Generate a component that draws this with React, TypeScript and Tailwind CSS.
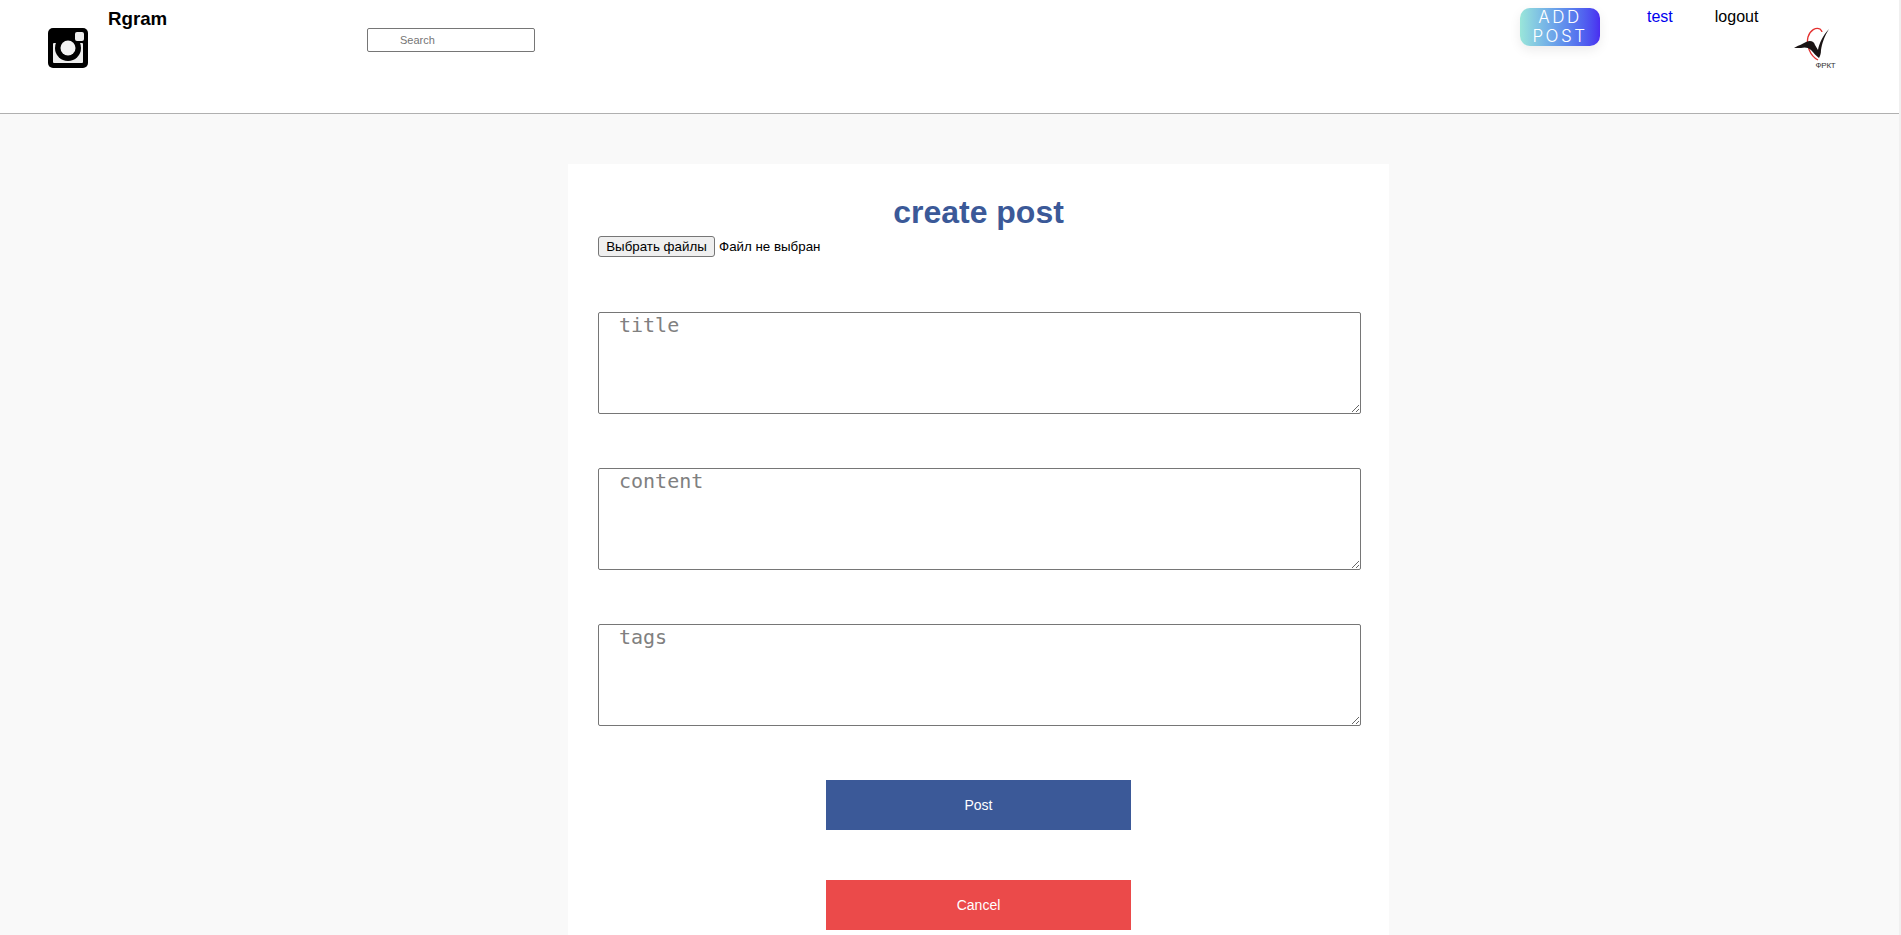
const sans = "font-['Liberation_Sans',Arial,sans-serif]";

const area =
  "block w-[763px] h-[102px] border border-[#767676] rounded-[2px] bg-transparent pl-[20px] pr-1 pt-px font-['DejaVu_Sans_Mono',monospace] text-[20px] leading-[23px] placeholder:text-[#808080] outline-none resize-y";

function InstaIcon() {
  return (
    <svg viewBox="0 0 40 40" className="w-10 h-10 shrink-0 block">
      <rect x="0" y="0" width="40" height="40" rx="5" fill="#000" />
      <rect x="5" y="15" width="30" height="20" rx="1" fill="#eee" />
      <circle cx="20" cy="20" r="13" fill="#000" />
      <circle cx="20" cy="20" r="7.5" fill="#f2f2f2" />
      <rect x="27" y="4" width="9" height="9" rx="2" fill="#eee" />
    </svg>
  );
}

function Logo() {
  return (
    <div className="relative w-[42px] h-[42px] shrink-0">
      <svg viewBox="0 0 42 42" className="w-[42px] h-[42px] block">
        <path d="M24 33C16 29 12 18 14 10c2-7 8-10 12-8 1 1 2 2 2 3" fill="none" stroke="#e4302f" strokeWidth="1.3" />
        <path
          d="M0 21C5 18 9 17 12 15c4-2 8-1 9 3l3 5c1-6 5-15 11-21-5 8-7 15-8 21 0 4-1 6-2 8-3-2-5-5-8-8-3-3-7-3-10-2-2 0-5 0-7 0z"
          fill="#1a1414"
        />
      </svg>
      <span className="absolute left-[21px] top-[34px] text-[8px] leading-[9px] tracking-[-0.2px] text-[#333]">ФРКТ</span>
    </div>
  );
}

export default function App() {
  return (
    <div className={`${sans} flex h-screen overflow-hidden bg-[#f0f0f0] text-black`}>
      <div className="w-[1899px] shrink-0 bg-[#f9f9f9]">
        <header className="flex items-start h-[114px] bg-white border-b border-[#b0b0b0] pl-[48px]">
          <div className="mt-[28px]">
            <InstaIcon />
          </div>
          <h3 className="ml-[20px] mt-[8px] w-[259px] text-[18.72px] leading-[21px] font-bold">Rgram</h3>
          <input
            placeholder="Search"
            className="mt-[28px] w-[168px] h-[24px] border border-[#767676] rounded-[2px] pl-[32px] text-[11px] placeholder:text-[#757575] outline-none"
          />
          <button className="ml-[985px] mt-[8px] w-[80px] h-[38px] rounded-[10px] bg-gradient-to-r from-[#9ae6d9] to-[#4a2cf0] text-white font-['Inter',sans-serif] font-light text-[17px] leading-[19px] tracking-[2.5px] shadow-[0_4px_12px_rgba(0,0,0,0.08)]">
            ADD POST
          </button>
          <a className="ml-[47px] mt-[8px] text-[16px] leading-[18px] text-[#0000ee]">test</a>
          <a className="ml-[42px] mt-[8px] text-[16px] leading-[18px]">logout</a>
          <div className="ml-[36px] mt-[27px]">
            <Logo />
          </div>
        </header>
        <main className="pt-[50px] pl-[568px]">
          <div className="w-[821px] h-[900px] bg-white pt-[30px] pl-[30px]">
            <h1 className="w-[761px] text-center text-[32px] leading-[37px] font-bold text-[#3b5998]">create post</h1>
            <div className="mt-[5px] flex items-center h-[21px] text-[13.33px]">
              <button className="w-[117px] h-[21px] border border-[#767676] rounded-[3px] bg-[#efefef] text-[13.33px]">
                Выбрать файлы
              </button>
              <span className="ml-[4px]">Файл не выбран</span>
            </div>
            <div className="mt-[55px] flex flex-col gap-[54px]">
              <textarea placeholder="title" className={area} />
              <textarea placeholder="content" className={area} />
              <textarea placeholder="tags" className={area} />
            </div>
            <div className="mt-[54px] ml-[228px] flex flex-col gap-[50px]">
              <button className="w-[305px] h-[50px] bg-[#3b5998] text-white text-[14px]">Post</button>
              <button className="w-[305px] h-[50px] bg-[#eb4a4a] text-white text-[14px]">Cancel</button>
            </div>
          </div>
        </main>
      </div>
    </div>
  );
}
